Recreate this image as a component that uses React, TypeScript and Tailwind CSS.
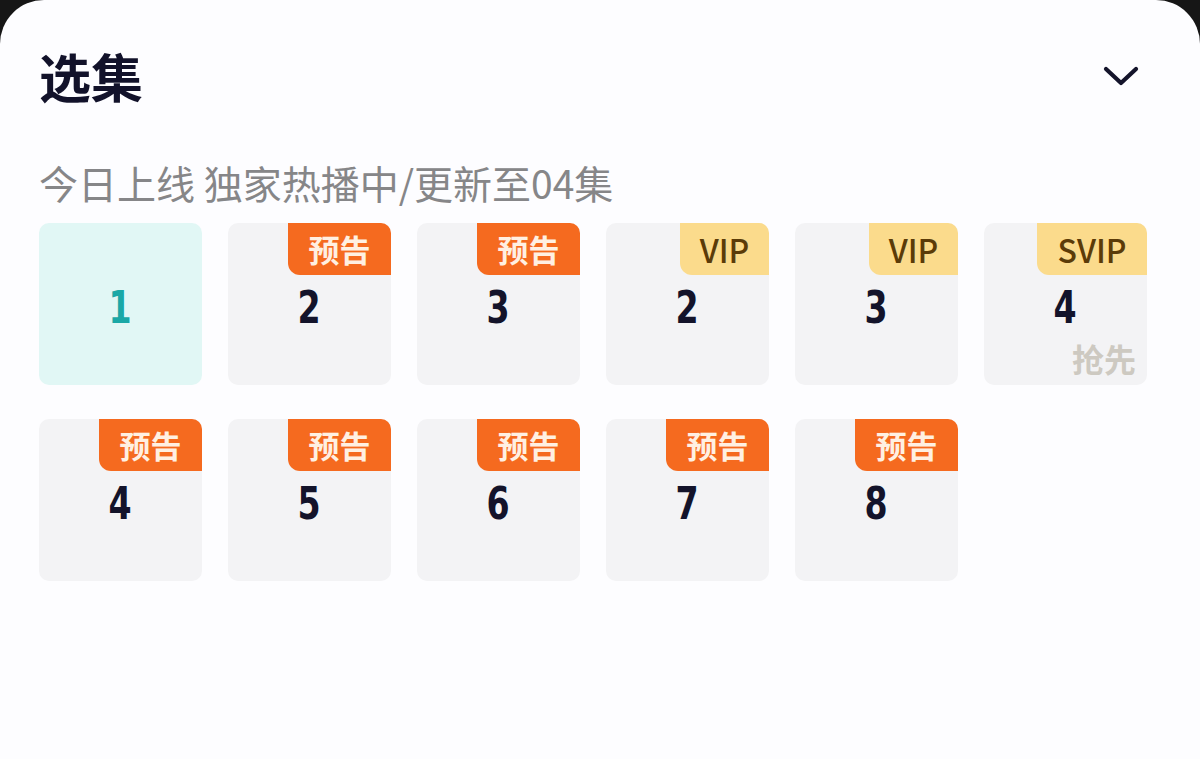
import { ReactNode } from "react";

type Tag = "preview" | "vip" | "svip" | null;

interface Episode {
    num: number;
    tag: Tag;
    active?: boolean;
    early?: boolean;
}

const cjk = "font-['Noto_Sans_CJK_SC','Noto_Sans',sans-serif]";

const episodes: Episode[] = [
    { num: 1, tag: null, active: true },
    { num: 2, tag: "preview" },
    { num: 3, tag: "preview" },
    { num: 2, tag: "vip" },
    { num: 3, tag: "vip" },
    { num: 4, tag: "svip", early: true },
    { num: 4, tag: "preview" },
    { num: 5, tag: "preview" },
    { num: 6, tag: "preview" },
    { num: 7, tag: "preview" },
    { num: 8, tag: "preview" },
];

function Badge({ tag }: { tag: Tag }): ReactNode {
    if (tag === "preview") {
        return (
            <span className={`absolute top-0 right-0 h-[52px] w-[103px] flex items-center justify-center rounded-bl-[12px] rounded-tr-[10px] bg-[#f56a1f] text-[#fff0e2] text-[31px] font-semibold ${cjk}`}>
                预告
            </span>
        );
    }
    if (tag === "vip" || tag === "svip") {
        return (
            <span className={`absolute top-0 right-0 h-[52px] ${tag === "svip" ? "w-[110px]" : "w-[89px]"} flex items-center justify-center rounded-bl-[12px] rounded-tr-[10px] bg-[#fbdb8c] text-[#5b3b08] text-[32px] font-medium ${cjk}`}>
                {tag === "svip" ? "SVIP" : "VIP"}
            </span>
        );
    }
    return null;
}

function EpisodeTile({ ep }: { ep: Episode }) {
    return (
        <div className={`relative h-[162px] rounded-[10px] flex items-center justify-center ${ep.active ? "bg-[#e1f7f5]" : "bg-[#f3f3f5]"}`}>
            <Badge tag={ep.tag} />
            <span className={`mt-[6px] text-[45px] font-bold leading-none scale-x-[0.82] font-['DejaVu_Sans_Condensed','DejaVu_Sans',sans-serif] ${ep.active ? "text-[#1aa8a6]" : "text-[#13132a]"}`}>
                {ep.num}
            </span>
            {ep.early && (
                <span className={`absolute right-[11px] bottom-[11px] text-[32px] font-bold leading-none text-[#cdc9c1] ${cjk}`}>
                    抢先
                </span>
            )}
        </div>
    );
}

export default function App() {
    return (
        <div className="w-[1200px] h-[759px] bg-[#161616] overflow-hidden">
            <div className="h-full bg-[#fdfdff] rounded-t-[44px] pl-[39px] pr-[53px]">
                {/* header */}
                <div className="pt-[46px] h-[106px] flex items-center justify-between">
                    <h1 className={`text-[52px] font-bold leading-none text-[#12122a] ${cjk}`}>选集</h1>
                    <svg width="36" height="24" viewBox="0 0 36 24" className="mr-[8px]" fill="none">
                        <path d="M3 5 L18 19 L33 5" stroke="#14142b" strokeWidth="4.2" strokeLinecap="round" strokeLinejoin="round" />
                    </svg>
                </div>
                <p className={`mt-[54px] text-[39px] leading-[44px] text-[#868688] ${cjk}`}>
                    今日上线 独家热播中/更新至04集
                </p>
                {/* episode grid */}
                <div className="mt-[19px] grid grid-cols-[repeat(6,163px)] gap-x-[26px] gap-y-[34px]">
                    {episodes.map((ep, i) => (
                        <EpisodeTile key={i} ep={ep} />
                    ))}
                </div>
            </div>
        </div>
    );
}
